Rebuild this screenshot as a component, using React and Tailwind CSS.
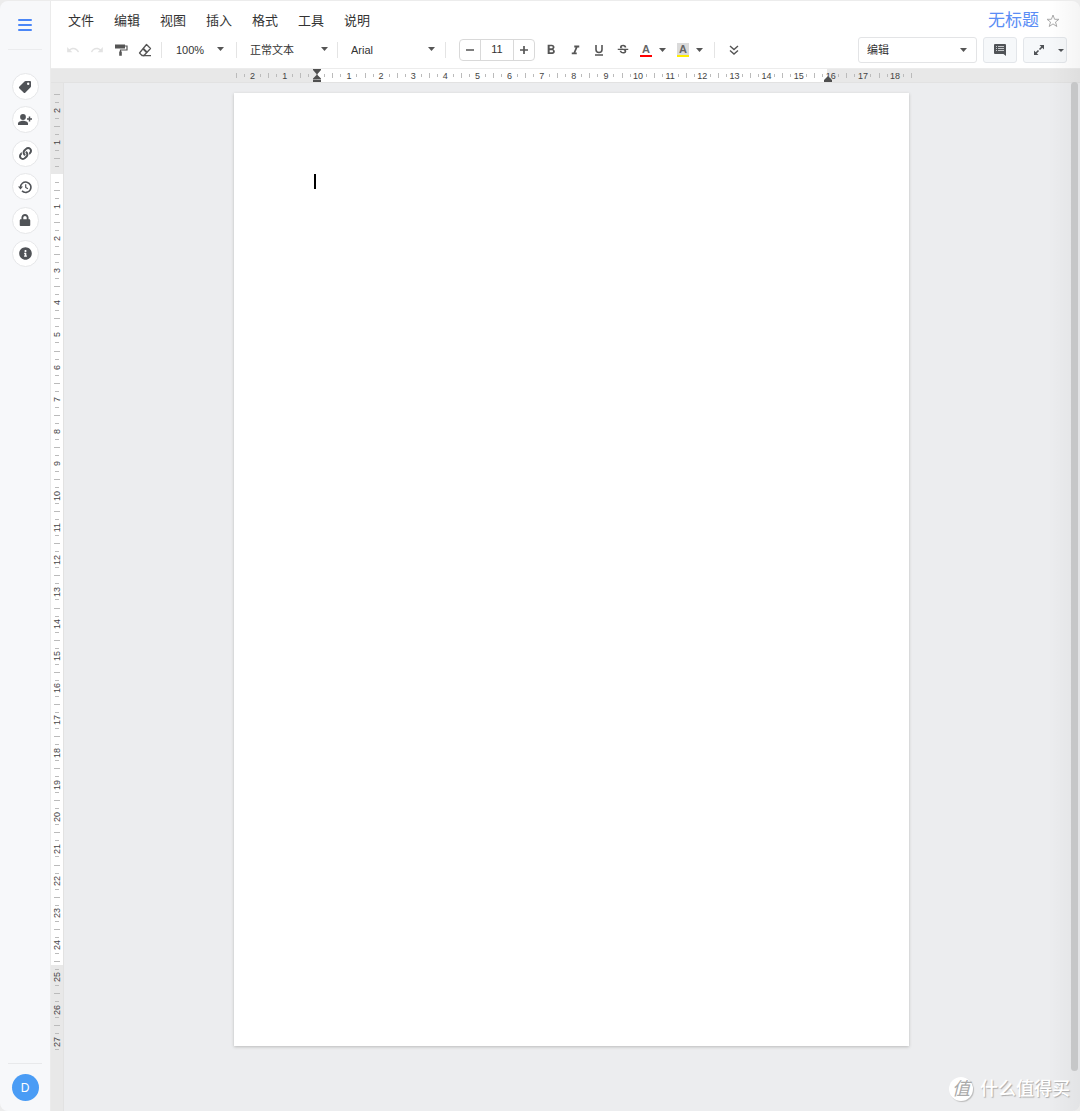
import React from 'react';
import { MdUndo, MdRedo, MdFormatBold, MdFormatItalic, MdStrikethroughS } from 'react-icons/md';
import { FaLink, FaLock, FaInfoCircle } from 'react-icons/fa';

const menus = ['文件', '编辑', '视图', '插入', '格式', '工具', '说明'];

const TagIcon = () => (
  <svg viewBox="0 0 14 14" className="h-[14px] w-[14px] fill-current" aria-hidden="true">
    <path
      fillRule="evenodd"
      d="M7.600 1H12a1 1 0 0 1 1 1v4.300a1.500 1.500 0 0 1-.4 1L7.200 12.700a1 1 0 0 1-1.400 0L1.200 8.200a1 1 0 0 1 0-1.400L6.500 1.500A1.600 1.600 0 0 1 7.600 1zM10.200 2.600a1.200 1.200 0 1 0 0 2.400 1.200 1.200 0 0 0 0-2.400z"
    />
  </svg>
);

const PersonAddIcon = () => (
  <svg viewBox="0 0 16 14" className="h-[14px] w-4 fill-current" aria-hidden="true">
    <circle cx="6" cy="4" r="2.900" />
    <path d="M1 12v-1.500C1 8.600 3.800 7.700 6 7.700s5 .9 5 2.800V12z" />
    <path d="M12.500 3.500v5M10 6h5" stroke="currentColor" strokeWidth="1.500" />
  </svg>
);

const HistoryIcon = () => (
  <svg viewBox="0 0 14 14" className="h-[14px] w-[14px] fill-none stroke-current" aria-hidden="true">
    <path d="M2.500 7.500a5.200 5.200 0 1 1 1.500 3.400" strokeWidth="1.600" />
    <path d="M7.700 4.200v3.200l2.200 1.400" strokeWidth="1.200" />
    <path d="M0 6.500h5L2.500 9.500z" fill="currentColor" stroke="none" />
  </svg>
);

const sideActions = [
  { label: '标签', icon: <TagIcon /> },
  { label: '共享', icon: <PersonAddIcon /> },
  { label: '链接', icon: <FaLink size={13} /> },
  { label: '历史记录', icon: <HistoryIcon /> },
  { label: '锁定', icon: <FaLock size={12} /> },
  { label: '信息', icon: <FaInfoCircle size={13} /> },
];

// one entry for every quarter of a centimetre
const range = (from, to) => {
  const list = [];
  for (let n = from; n <= to; n += 0.25) list.push(n);
  return list;
};

const Caret = ({ className = '' }) => (
  <svg viewBox="0 0 7 4" className={`h-1 w-[7px] fill-[#555] ${className}`} aria-hidden="true">
    <path d="M0 0h7L3.500 4z" />
  </svg>
);

const Separator = () => <div className="h-4 w-px shrink-0 bg-[#e4e4e4]" />;

const ToolButton = ({ label, disabled, children }) => (
  <button
    type="button"
    aria-label={label}
    disabled={disabled}
    className="flex h-6 w-6 shrink-0 items-center justify-center text-[#555] disabled:text-[#e2e2e2]"
  >
    {children}
  </button>
);

const ToolSelect = ({ label, value, className }) => (
  <div className={`relative shrink-0 ${className}`}>
    <select
      aria-label={label}
      defaultValue={value}
      className="h-6 w-full appearance-none bg-transparent pb-[2px] pl-3 text-[11px] text-[#333]"
    >
      <option>{value}</option>
    </select>
    <Caret className="pointer-events-none absolute top-[10px] right-2" />
  </div>
);

const ColorButton = ({ label, letterClass, barClass }) => (
  <button type="button" aria-label={label} className="flex h-6 w-[37px] shrink-0 items-center gap-[7px] pl-[5px]">
    <span className="flex w-3 flex-col">
      <span className={`flex h-3 items-center justify-center text-[11px] font-bold text-[#666] ${letterClass}`}>A</span>
      <span className={`h-[2px] ${barClass}`} />
    </span>
    <Caret />
  </button>
);

const HorizontalRuler = () => (
  <div className="flex h-[14px] shrink-0 justify-center border-b border-[#e2e2e2] bg-[#e8e8e8] pl-4">
    <div className="flex w-[682px] shrink-0">
      {range(-2.5, 18.5).map((n) => {
        let bg = '';
        if (n === 0) bg = 'bg-[linear-gradient(90deg,#e8e8e8_50%,#fff_50%)]';
        else if (n > 0 && n < 16) bg = 'bg-white';
        return (
          <div key={n} className={`relative flex min-w-0 flex-1 items-center justify-center ${bg}`}>
            {n % 1 === 0 && n !== 0 && (
              <span className="z-10 text-[9px] leading-3 text-[#444]">{Math.abs(n)}</span>
            )}
            {n % 1 !== 0 && <span className={`w-px shrink-0 bg-[#bbb] ${n % 0.5 === 0 ? 'h-[5px]' : 'h-[3px]'}`} />}
            {n === 0 && (
              <svg viewBox="0 0 8 13" className="z-10 h-[13px] w-2 shrink-0 fill-[#505050]" aria-hidden="true">
                <path d="M0 0h8v1L4.500 5v1L8 9.500v1H0v-1L3.500 6V5L0 1zM0 11h8v2H0z" />
              </svg>
            )}
            {n === 16 && (
              <svg viewBox="0 0 8 6" className="absolute right-[3px] bottom-0 z-20 h-[6px] w-2 fill-[#505050]" aria-hidden="true">
                <path d="M4 0l4 4v2H0V4z" />
              </svg>
            )}
          </div>
        );
      })}
    </div>
  </div>
);

const VerticalRuler = () => (
  <div className="w-[13px] shrink-0 overflow-hidden border-r border-[#e2e2e2] bg-[#e8e8e8] pt-[7px]">
    <div className="flex h-[963px] flex-col">
      {range(-2.5, 27.25).map((n) => {
        let bg = '';
        if (n === 0) bg = 'bg-[linear-gradient(180deg,#e8e8e8_50%,#fff_50%)]';
        else if (n > 0 && n < 24.75) bg = 'bg-white';
        return (
          <div key={n} className={`flex min-h-0 flex-1 items-center justify-center ${bg}`}>
            {n % 1 === 0 && n !== 0 && (
              <span className="z-10 rotate-180 text-[9px] leading-3 text-[#444] [writing-mode:vertical-rl]">
                {Math.abs(n)}
              </span>
            )}
            {n % 1 !== 0 && <span className={`h-px bg-[#bbb] ${n % 0.5 === 0 ? 'w-[6px]' : 'w-1'}`} />}
          </div>
        );
      })}
    </div>
  </div>
);

const Sidebar = () => (
  <aside className="flex w-[51px] shrink-0 flex-col items-center border-r border-[#ebebeb] bg-[#f7f8fa] pb-[10px]">
    <button type="button" aria-label="菜单" className="flex h-12 w-full flex-col items-center justify-center gap-[3px]">
      <span className="h-[2px] w-[14px] rounded bg-[#4a86f7]" />
      <span className="h-[2px] w-[14px] rounded bg-[#4a86f7]" />
      <span className="h-[2px] w-[14px] rounded bg-[#4a86f7]" />
    </button>
    <div className="h-px w-[34px] bg-[#ebecee]" />
    <nav className="mt-[23px] flex h-[194px] flex-col justify-between">
      {sideActions.map((action) => (
        <button
          key={action.label}
          type="button"
          aria-label={action.label}
          className="flex h-[27px] w-[27px] items-center justify-center rounded-full border border-[#e6e7e9] bg-white text-[#505357]"
        >
          {action.icon}
        </button>
      ))}
    </nav>
    <div className="mt-auto h-px w-[34px] bg-[#e8e9eb]" />
    <button
      type="button"
      aria-label="账户"
      className="mt-[10px] flex h-[27px] w-[27px] items-center justify-center rounded-full bg-[#4a9cf5] text-[12px] text-white"
    >
      D
    </button>
  </aside>
);

const Toolbar = () => (
  <div className="flex h-6 items-center">
    <ToolButton label="撤消" disabled><MdUndo size={14} /></ToolButton>
    <ToolButton label="重做" disabled><MdRedo size={14} /></ToolButton>
    <ToolButton label="格式刷">
      <svg viewBox="0 0 14 14" className="h-[14px] w-[14px]" aria-hidden="true">
        <path d="M1 1.500h10v4H1z" fill="currentColor" />
        <path d="M11 3h2v4H6.500v2" fill="none" stroke="currentColor" strokeWidth="1.200" />
        <path d="M5.200 8.500h2.600v4.200H5.200z" fill="currentColor" />
      </svg>
    </ToolButton>
    <ToolButton label="清除格式">
      <svg viewBox="0 0 14 14" className="h-[14px] w-[14px] fill-none stroke-current" aria-hidden="true">
        <path d="M8.500 1.500l4 4-6.500 7H4L1.500 10z" strokeWidth="1.300" strokeLinejoin="round" />
        <path d="M5 5.500l4 4" strokeWidth="1.800" />
        <path d="M5 12.600h8" strokeWidth="1.300" />
      </svg>
    </ToolButton>
    <div className="w-1" />
    <Separator />
    <ToolSelect label="缩放" value="100%" className="mr-1 ml-[2px] w-[68px]" />
    <Separator />
    <ToolSelect label="样式" value="正常文本" className="mr-px ml-px w-[98px]" />
    <Separator />
    <ToolSelect label="字体" value="Arial" className="mr-[2px] ml-px w-[104px]" />
    <Separator />
    <div className="mr-1 ml-[13px] flex h-[22px] w-[76px] shrink-0 items-stretch rounded-sm border border-[#d9d9d9] text-[#555]">
      <button type="button" aria-label="减小字号" className="flex w-5 items-center justify-center">
        <svg viewBox="0 0 8 8" className="h-2 w-2 stroke-current" aria-hidden="true">
          <path d="M0 4h8" strokeWidth="1.700" />
        </svg>
      </button>
      <input
        type="text"
        aria-label="字号"
        defaultValue="11"
        className="min-w-0 flex-1 border-x border-[#d9d9d9] pb-px text-center text-[11px] text-[#333]"
      />
      <button type="button" aria-label="增大字号" className="flex w-5 items-center justify-center">
        <svg viewBox="0 0 8 8" className="h-2 w-2 stroke-current" aria-hidden="true">
          <path d="M0 4h8M4 0v8" strokeWidth="1.700" />
        </svg>
      </button>
    </div>
    <ToolButton label="粗体"><MdFormatBold size={16} /></ToolButton>
    <ToolButton label="斜体">
      <MdFormatItalic size={15} />
    </ToolButton>
    <ToolButton label="下划线">
      <svg viewBox="0 0 10 12" className="h-3 w-[10px] fill-none stroke-current" aria-hidden="true">
        <path d="M2 1v4.500a3 3 0 0 0 6 0V1" strokeWidth="1.600" />
        <path d="M1 11h8" strokeWidth="1.300" />
      </svg>
    </ToolButton>
    <ToolButton label="删除线"><MdStrikethroughS size={14} /></ToolButton>
    <ColorButton label="文字颜色" letterClass="" barClass="bg-[#f00]" />
    <ColorButton label="突出显示颜色" letterClass="bg-[#dadada]" barClass="bg-[#ffee00]" />
    <div className="w-[5px]" />
    <Separator />
    <div className="w-[7px]" />
    <ToolButton label="更多">
      <svg viewBox="0 0 10 10" className="h-[10px] w-[10px] fill-none stroke-current" aria-hidden="true">
        <path d="M1 1l4 3.500L9 1M1 5.500L5 9l4-3.500" strokeWidth="1.400" />
      </svg>
    </ToolButton>
  </div>
);

const Header = () => (
  <header className="flex h-[68px] shrink-0 justify-between border-b border-[#ececec] bg-white">
    <div className="flex flex-col pt-2 pl-[10px]">
      <nav className="mb-[5px] flex h-6 items-center gap-5 pl-[7px]">
        {menus.map((menu) => (
          <button key={menu} type="button" className="text-[13px] leading-5 text-[#333]">
            {menu}
          </button>
        ))}
      </nav>
      <Toolbar />
    </div>
    <div className="flex flex-col items-end pt-2 pr-[13px]">
      <div className="flex h-6 items-center gap-[7px] pr-[7px]">
        <h1 className="text-[17px] leading-6 text-[#5a8df5]">无标题</h1>
        <button type="button" aria-label="加星标">
          <svg viewBox="0 0 14 14" className="h-[14px] w-[14px] fill-none stroke-[#aaa]" aria-hidden="true">
            <path d="M7 1l1.600 4.300H13L9.500 8l1.300 4.500L7 9.900l-3.800 2.600L4.500 8 1 5.300h4.400z" />
          </svg>
        </button>
      </div>
      <div className="mt-1 flex h-[26px] gap-[6px]">
        <div className="relative w-[119px]">
          <select
            aria-label="模式"
            defaultValue="编辑"
            className="h-full w-full appearance-none rounded-[3px] border border-[#e3e4e6] bg-white pl-2 text-[11px] text-[#333]"
          >
            <option>编辑</option>
          </select>
          <Caret className="pointer-events-none absolute top-[11px] right-[10px]" />
        </div>
        <button
          type="button"
          aria-label="评论"
          className="flex w-[34px] items-center justify-center rounded-[3px] border border-[#e3e6ea] bg-[#f6f8fa] text-[#505357]"
        >
          <svg viewBox="0 0 12 12" className="h-3 w-3" aria-hidden="true">
            <path d="M1 0h10a1 1 0 0 1 1 1v11l-2.500-2H1a1 1 0 0 1-1-1V1a1 1 0 0 1 1-1z" fill="currentColor" />
            <path d="M2 2.500h1M4 2.500h6M2 4.500h1M4 4.500h6M2 6.500h1M4 6.500h6" stroke="#c5c8cb" strokeWidth="1" />
          </svg>
        </button>
        <button
          type="button"
          aria-label="全屏"
          className="flex w-[44px] items-center justify-between rounded-[3px] border border-[#e3e6ea] bg-[#f6f8fa] pr-[2px] pl-[9px] text-[#505357]"
        >
          <svg viewBox="0 0 12 12" className="h-3 w-3 fill-current" aria-hidden="true">
            <path d="M6.500 1H11v4.500zM1 6.500L5.500 11H1z" />
            <path d="M9.500 2.500l-3 3M5.500 6.500l-3 3" stroke="currentColor" strokeWidth="1.600" />
          </svg>
          <svg viewBox="0 0 6 3" className="h-[3px] w-[6px] fill-[#505357]" aria-hidden="true">
            <path d="M0 0h6L3 3z" />
          </svg>
        </button>
      </div>
    </div>
  </header>
);

const Watermark = () => (
  <div className="pointer-events-none absolute right-[10px] bottom-[10px] flex items-center gap-[7px] text-white [text-shadow:1px_1px_1px_#aaa]">
    <span className="flex h-6 w-6 items-center justify-center rounded-full bg-white text-[18px] text-[#aaa] italic shadow-[1px_1px_1px_#bbb] [text-shadow:none]">
      值
    </span>
    <span className="text-[18px] leading-6 font-medium">什么值得买</span>
  </div>
);

export default function App() {
  return (
    <div className="h-screen bg-[#ececec] pt-px font-['Liberation_Sans','Noto_Sans_CJK_SC',sans-serif]">
      <div className="relative flex h-full overflow-hidden rounded-lg bg-[#ecedef]">
        <Sidebar />
        <div className="flex min-w-0 flex-1 flex-col">
          <Header />
          <HorizontalRuler />
          <div className="flex min-h-0 flex-1">
            <VerticalRuler />
            <main className="flex min-w-0 flex-1 justify-center overflow-hidden pt-[10px] pr-[2px]">
              <article
                role="textbox"
                aria-label="文档"
                className="h-[953px] w-[675px] shrink-0 bg-white px-20 py-[81px] shadow-[0_1px_3px_#bbb]"
              >
                <div className="h-[15px] w-[2px] bg-black" />
              </article>
            </main>
          </div>
        </div>
        <div className="pointer-events-none absolute inset-y-0 right-0 w-8 bg-linear-to-r from-transparent to-black/4" />
        <div className="absolute top-[81px] right-[2px] bottom-10 w-[7px] rounded-full bg-[#c6c7c8]" />
        <Watermark />
      </div>
    </div>
  );
}
